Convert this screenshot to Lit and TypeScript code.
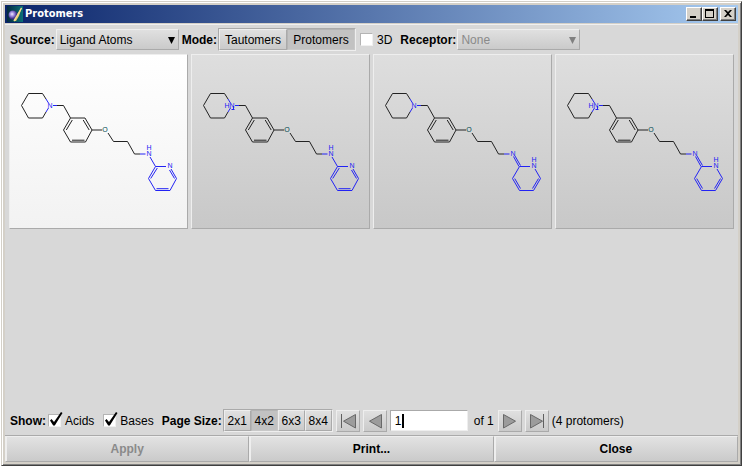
import { LitElement, html, svg, css, nothing } from "lit";
import { customElement, property } from "lit/decorators.js";

@customElement("ligand-drawing")
class LigandDrawing extends LitElement {
  /** Piperidine nitrogen carries an extra proton. */
  @property({ type: Boolean }) charged = false;
  /** Proton sits on the pyridine ring nitrogen. */
  @property({ type: Boolean }) imine = false;

  static styles = css`
    :host { display: block; }
    .drawing { display: block; width: 100%; height: auto; }
    .carbon { fill: none; stroke: #222; stroke-width: 1; }
    .nitrogen { fill: none; stroke: #2222f4; stroke-width: 1; }
    .atom {
      font: 7px "Liberation Sans", Arial, sans-serif;
      fill: #2222f4;
      text-anchor: middle;
    }
    .oxygen { fill: #004850; }
  `;

  render() {
    return html`
      <svg class="drawing" viewBox="0 0 177 173" role="img" aria-label="Protomer structure">
        <path class="carbon" d="M36 44L32.5 38.5H18.5L11.5 50.5L18.5 63H32.5L36 57
          M46.500 50.500H53.500L60.500 63H75L82 75L75.500 87H60.500L53.500 75L60.500 63
          M62.300 65L56.300 75 M73.200 65L79.200 75 M62 85.200H74.500
          M82 75H92 M98 78L103.500 86.500H117.500L124.500 99H130"/>
        <path class="nitrogen" d="M36 44L38.500 48 M36 57L38.500 53 M43 50.500H47 M130 99H135.500"/>
        ${this.imine
          ? svg`<path class="nitrogen" d="M139.500 101.500L145 111.500 M141 101L146.500 110.500
              M145.500 111.500H156 M145.500 111.500L138.500 123.500L145.500 135.500H159.500L166.500 123.500L161 114
              M140.700 123.500L146.500 133.500 M164.500 123.500L158.500 133.500"/>
            <text class="atom" x="139" y="101">N</text>
            <text class="atom" x="160" y="107">H</text>
            <text class="atom" x="160" y="113">N</text>`
          : svg`<path class="nitrogen" d="M140 102L145.500 111.500H156
              M145.500 111.500L138.500 123.500L145.500 135.500H160L166.500 123.500L161 114
              M147.300 113L140.700 123.500 M146.500 133.700H158.500 M164.500 123.500L159.500 115"/>
            <text class="atom" x="139" y="95">H</text>
            <text class="atom" x="139" y="101">N</text>
            <text class="atom" x="160" y="113">N</text>`}
        ${this.charged
          ? svg`<text class="atom" x="35" y="53">H</text>
            <path class="nitrogen" d="M39.500 54.500H42.500 M41.500 51V54"/>`
          : nothing}
        <text class="atom" x="40" y="53">N</text>
        <text class="atom oxygen" x="95" y="77">O</text>
      </svg>`;
  }
}

@customElement("app-root")
class AppRoot extends LitElement {
  static styles = css`
    :host {
      display: flex;
      box-sizing: border-box;
      min-height: 100vh;
      padding: 1px;
      background: #fff;
      color: #000;
      font: 12px/14px "Liberation Sans", Arial, sans-serif;
    }
    * { box-sizing: border-box; }
    button, input, select { font: inherit; color: inherit; margin: 0; border-radius: 0; }
    .window {
      flex: 1;
      min-width: 0;
      display: flex;
      flex-direction: column;
      background: #d4d0c8;
      border: 1px solid;
      border-color: #d4d0c8 #404040 #404040 #d4d0c8;
      box-shadow: inset 1px 1px #fff, inset -1px -1px #808080;
      padding: 3px;
    }
    .titlebar {
      display: flex;
      align-items: center;
      height: 18px;
      padding: 0 2px;
      background: linear-gradient(90deg, #0a246a, #a6caf0);
      color: #fff;
    }
    .logo { width: 16px; height: 16px; flex: none; }
    .title {
      flex: 1;
      margin: 0 0 0 2px;
      font: bold 11px/14px "DejaVu Sans Condensed", "DejaVu Sans", sans-serif;
    }
    .caption {
      width: 16px;
      height: 14px;
      padding: 0;
      background: #d4d0c8;
      border: 1px solid;
      border-color: #fff #404040 #404040 #fff;
      box-shadow: inset -1px -1px #808080;
    }
    .caption svg { display: block; width: 14px; height: 12px; }
    .close { margin-left: 2px; }
    .client {
      flex: 1;
      display: flex;
      flex-direction: column;
      margin-top: 1px;
      background: #d8d8d8;
      border-top: 1px solid #f0f0f0;
    }
    .bar { display: flex; align-items: center; padding: 0 5px; gap: 3px; }
    .toolbar { height: 29px; }
    .footer { height: 29px; }
    .strong { font-weight: bold; margin-right: -2px; }
    .select { display: grid; width: 123px; height: 21px; align-items: center; }
    .select > * { grid-area: 1 / 1; }
    .select select {
      appearance: none;
      width: 100%;
      height: 100%;
      padding: 0 3px;
      background: linear-gradient(#e0e0e0, #cacaca);
      border: 1px solid;
      border-color: #eee #aaa #aaa #eee;
      outline: none;
    }
    .select select:disabled { color: #8a8a8a; opacity: 1; }
    .arrow { justify-self: end; margin-right: 4px; width: 7px; height: 8px; pointer-events: none; }
    .arrow.dim { fill: #808080; }
    .group {
      display: flex;
      height: 23px;
      border: 1px solid;
      border-color: #aaa #eee #eee #aaa;
    }
    .raised {
      background: linear-gradient(#e0e0e0, #cacaca);
      border: 1px solid;
      border-color: #eee #aaa #aaa #eee;
    }
    .group button { padding: 0 4px; white-space: nowrap; }
    .group .mode { width: 68px; }
    .group .size { width: 27px; padding: 0; }
    .group .on { background: #c2c2c2; border-color: #b4b4b4 #c8c8c8 #c8c8c8 #b4b4b4; }
    .check { display: flex; align-items: center; gap: 4px; margin: 0 5px 0 1px; }
    .box { position: relative; display: block; width: 13px; height: 13px; }
    .box input {
      appearance: none;
      display: block;
      width: 13px;
      height: 13px;
      background: #fff;
      border: 1px solid;
      border-color: #b4b4b4 #f0f0f0 #f0f0f0 #b4b4b4;
    }
    .tick {
      display: none;
      position: absolute;
      left: 0;
      bottom: 0;
      width: 15px;
      height: 16px;
      pointer-events: none;
    }
    input:checked + .tick { display: block; }
    .nav { width: 24px; height: 22px; padding: 0; }
    .nav svg { display: block; width: 22px; height: 20px; }
    .shape { fill: #9c9c9c; stroke: #686868; stroke-width: 1; }
    .stop { stroke: #606060; stroke-width: 1; }
    .page { display: grid; width: 78px; height: 21px; align-items: center; }
    .page > * { grid-area: 1 / 1; }
    .page input {
      width: 100%;
      height: 100%;
      padding: 0 4px;
      background: #fff;
      border: 1px solid;
      border-color: #aaa #eee #eee #aaa;
      outline: none;
      caret-color: transparent;
    }
    .cursor { width: 2px; height: 14px; margin-left: 12px; background: #000; }
    .total { padding: 0 1px 0 3px; }
    .grid {
      flex: 1;
      display: grid;
      grid-template-columns: repeat(4, 1fr);
      align-content: start;
      gap: 3px;
      padding: 0 4px;
    }
    .tile {
      display: block;
      width: 100%;
      padding: 0;
      background: linear-gradient(#dedede, #c8c8c8);
      border: 1px solid;
      border-color: #eee #aaa #aaa #eee;
    }
    .tile.selected { background: linear-gradient(#fff, #f2f2f2); }
    .actions {
      display: grid;
      grid-template-columns: repeat(3, 1fr);
      border-top: 1px solid #aaa;
      background: #aaa;
    }
    .action {
      height: 26px;
      font-weight: bold;
      background: linear-gradient(#e2e2e2, #cacaca);
      border: 1px solid;
      border-color: #eee #aaa #aaa #eee;
      box-shadow: inset 1px 0 #eee;
    }
    .action:disabled { color: #8a8a8a; }
  `;

  private sizes = ["2x1", "4x2", "6x3", "8x4"];
  private protomers = [
    { charged: false, imine: false },
    { charged: true, imine: false },
    { charged: false, imine: true },
    { charged: true, imine: true },
  ];

  private check(label: string, checked: boolean) {
    return html`<label class="check">
      <span class="box">
        <input type="checkbox" .checked=${checked} />
        <svg class="tick" viewBox="0 0 15 16" aria-hidden="true">
          <path d="M2 9.500L3.500 8L6 11L13 1L14.500 2L6.800 14.500H5.200Z" />
        </svg>
      </span>${label}</label>`;
  }

  private nav(label: string, left: boolean, stop: boolean) {
    const shape = stop
      ? svg`<path class="shape" d=${left ? "M18.500 3.500V17L6.500 10.200Z" : "M4.500 3.500V17L16.500 10.200Z"} />
          <path class="stop" d=${left ? "M4.500 3V17" : "M17.500 3V17"} />`
      : svg`<path class="shape" d=${left ? "M17.500 3.500V17L5.500 10.200Z" : "M4.500 3.500V17L16.500 10.200Z"} />`;
    return html`<button class="raised nav" aria-label=${label}>
      <svg viewBox="0 0 22 20">${shape}</svg>
    </button>`;
  }

  render() {
    return html`
      <div class="window">
        <header class="titlebar">
          <svg class="logo" viewBox="0 0 16 16" aria-hidden="true">
            <defs>
              <radialGradient id="orb" cx="40%" cy="40%">
                <stop offset="0" stop-color="#f0eaff" />
                <stop offset="0.5" stop-color="#9a86dc" />
                <stop offset="1" stop-color="#40308a" />
              </radialGradient>
              <linearGradient id="sea" x2="1">
                <stop offset="0" stop-color="#052a40" />
                <stop offset="1" stop-color="#0a7078" />
              </linearGradient>
            </defs>
            <rect width="16" height="16" fill="url(#sea)" />
            <path d="M15 1L9 10L7 15L9 15L12 10Z" fill="#e8c860" />
            <circle cx="6" cy="9" r="4.500" fill="url(#orb)" />
            <path d="M14.500 2L10 10L7 15" stroke="#f4dc90" stroke-width="1.500" fill="none" />
          </svg>
          <h1 class="title">Protomers</h1>
          <button class="caption" aria-label="Minimize">
            <svg viewBox="0 0 14 12"><path d="M3 8H9V10H3Z" /></svg>
          </button>
          <button class="caption" aria-label="Maximize">
            <svg viewBox="0 0 14 12"><path fill-rule="evenodd" d="M2 1H11V10H2ZM3 3V9H10V3Z" /></svg>
          </button>
          <button class="caption close" aria-label="Close window">
            <svg viewBox="0 0 14 12"><path d="M3 2H5L7 4L9 2H11L8 5.500L11 9H9L7 7L5 9H3L6 5.500Z" /></svg>
          </button>
        </header>
        <main class="client">
          <div class="bar toolbar">
            <label class="strong" for="source">Source:</label>
            <span class="select">
              <select id="source"><option>Ligand Atoms</option></select>
              <svg class="arrow" viewBox="0 0 7 8" aria-hidden="true"><path d="M0 1H7L3.500 8Z" /></svg>
            </span>
            <span class="strong">Mode:</span>
            <div class="group" role="group" aria-label="Mode">
              <button class="raised mode">Tautomers</button>
              <button class="raised mode on" aria-pressed="true">Protomers</button>
            </div>
            ${this.check("3D", false)}
            <label class="strong" for="receptor">Receptor:</label>
            <span class="select">
              <select id="receptor" disabled><option>None</option></select>
              <svg class="arrow dim" viewBox="0 0 7 8" aria-hidden="true"><path d="M0 1H7L3.500 8Z" /></svg>
            </span>
          </div>
          <div class="grid">
            ${this.protomers.map(
              (p, i) => html`<button class="tile ${i === 0 ? "selected" : ""}" aria-label="Protomer ${i + 1}">
                <ligand-drawing .charged=${p.charged} .imine=${p.imine}></ligand-drawing>
              </button>`
            )}
          </div>
          <div class="bar footer">
            <span class="strong">Show:</span>
            ${this.check("Acids", true)} ${this.check("Bases", true)}
            <span class="strong">Page Size:</span>
            <div class="group" role="group" aria-label="Page size">
              ${this.sizes.map((s) => html`<button class="raised size ${s === "4x2" ? "on" : ""}">${s}</button>`)}
            </div>
            ${this.nav("First page", true, true)} ${this.nav("Previous page", true, false)}
            <span class="page">
              <input type="text" aria-label="Page" .value=${"1"} />
              <span class="cursor"></span>
            </span>
            <span class="total">of 1</span>
            ${this.nav("Next page", false, false)} ${this.nav("Last page", false, true)}
            <span>(4 protomers)</span>
          </div>
          <div class="actions">
            <button class="action" disabled>Apply</button>
            <button class="action">Print...</button>
            <button class="action">Close</button>
          </div>
        </main>
      </div>`;
  }
}
